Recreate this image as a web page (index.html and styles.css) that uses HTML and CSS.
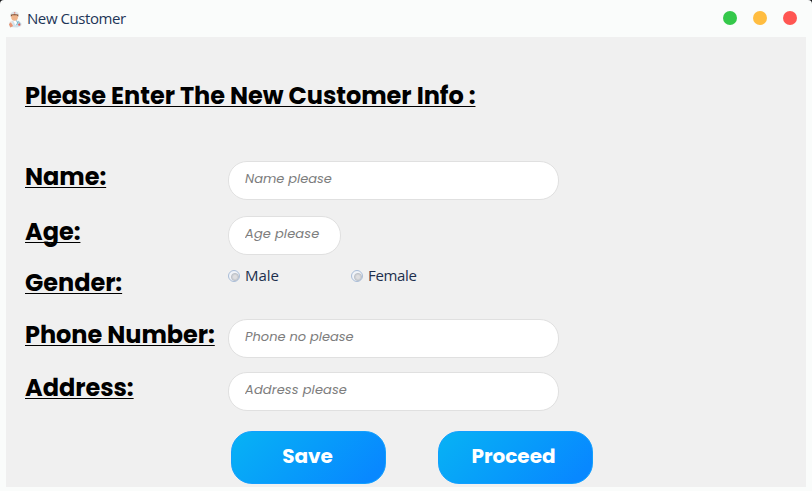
FILE: index.html
```html
<!DOCTYPE html>
<html lang="en">
<head>
<meta charset="utf-8">
<title>New Customer</title>
<link rel="stylesheet" href="styles.css">
</head>
<body>
<div class="window">
  <header class="titlebar">
    <svg class="app-icon" viewBox="0 0 16 18" aria-hidden="true">
      <path d="M2 17 1 13l3-2.500 4-1 4 1 2.500 3L14 16l-4 1.500z" fill="#d3e2eb"/>
      <path d="m5.500 10 2.500 5 2.500-5z" fill="#fff"/>
      <path d="M1.500 12 4 10l1.500 6-3 1z" fill="#eee5e0"/>
      <path d="m1 14 2-2 2.500 4-3 1.500z" fill="#e99675"/>
      <path d="m9 10 1.500 3-1.500 2M11 11l2 3" fill="none" stroke="#6cb6cb"/>
      <circle cx="12" cy="14.500" r="1.200" fill="#e65a55"/>
      <ellipse cx="7" cy="6" rx="3.600" ry="4.300" fill="#efb48b"/>
      <path d="M3 6V3.500h8V6L9.500 4.500h-5z" fill="#76482f"/>
      <path d="M2.800 3.700C2.600 1.500 5 .5 7 .5s4.600 1 4.300 3.200L7 3z" fill="#dfe5e8"/>
      <path d="M6.300 2h1.500" stroke="#e05b50"/>
    </svg>
    <span class="title">New Customer</span>
    <div class="controls"><i class="dot green"></i><i class="dot amber"></i><i class="dot red"></i></div>
  </header>
  <main class="content">
    <h1 class="heading">Please Enter The New Customer Info :</h1>
    <form class="form">
      <div class="row"><label class="label" for="name">Name:</label><input id="name" class="field" placeholder="Name please"></div>
      <div class="row row-age"><label class="label" for="age">Age:</label><input id="age" class="field short" placeholder="Age please"></div>
      <div class="row row-gender"><span class="label">Gender:</span>
        <div class="radios">
          <label class="option"><input class="radio" type="radio" name="gender"><span>Male</span></label>
          <label class="option"><input class="radio" type="radio" name="gender"><span>Female</span></label>
        </div>
      </div>
      <div class="row row-phone"><label class="label" for="phone">Phone Number:</label><input id="phone" class="field" placeholder="Phone no please"></div>
      <div class="row row-address"><label class="label" for="address">Address:</label><input id="address" class="field" placeholder="Address please"></div>
      <div class="actions"><button class="button" type="button">Save</button><button class="button proceed" type="button">Proceed</button></div>
    </form>
  </main>
</div>
</body>
</html>
```
FILE: styles.css
```css
* { box-sizing: border-box; }
body { margin: 0; background: #16181a; font-family: "Poppins", Inter, sans-serif; }
.window { width: 812px; height: 491px; padding: 0 6px 4px; background: #fafcfb; border-radius: 4px 4px 0 0; overflow: hidden; }
.titlebar { display: flex; align-items: center; height: 37px; padding: 0 9px 1px 2px; }
.app-icon { width: 15px; height: 17px; margin: 2px 4px 0 0; }
.title, .option { font-family: "Segoe UI", "Open Sans", sans-serif; font-size: 15px; color: #1d3557; white-space: nowrap; }
.title { margin-top: -1px; letter-spacing: -0.42px; }
.controls { display: flex; gap: 16px; margin-left: auto; }
.dot { width: 14px; height: 14px; border-radius: 50%; }
.green { background: #34c84a; }
.amber { background: #ffbd40; }
.red { background: #ff5652; }
.content { height: 450px; padding: 43px 19px 0; background: #f0f0f0; }
.heading { margin: 0 0 50px; height: 31px; }
.heading, .label { color: #000; font-size: 24px; font-weight: 700; line-height: 31px; letter-spacing: -0.04px; white-space: nowrap; text-decoration: underline; text-decoration-thickness: 1px; text-underline-offset: 2px; text-decoration-skip-ink: none; }
.row { display: grid; grid-template-columns: 203px auto; justify-content: start; align-items: start; height: 39px; margin-bottom: 16px; }
.row-age { margin-bottom: 12px; }
.row-gender { margin-bottom: 13px; }
.row-phone { margin-bottom: 14px; }
.row-address { margin-bottom: 0; }
.field { width: 331px; height: 39px; margin: 0; padding: 0 16px 4px; border: 1px solid #e0e0e0; border-radius: 19px; background: #fff; font: 13px "Poppins", Inter, sans-serif; outline: 0; }
.short { width: 113px; }
.short, .row-address .field { letter-spacing: 0.12px; }
.field::placeholder { color: #7d7d7d; opacity: 1; font-style: italic; }
.radios { display: flex; }
.option { display: flex; align-items: center; width: 123px; height: 18px; color: #1d2f4d; letter-spacing: -0.35px; }
.option:first-child { letter-spacing: 0; }
.option span { margin-top: -2px; }
.radio { appearance: none; width: 12px; height: 12px; margin: 0 5px 0 0; border: 1px solid #a9bdd8; border-radius: 50%; background: radial-gradient(circle at 60% 60%, #dedee0 0 1.5px, #bfc3c9 3.5px, #f0f3f8 4.5px); }
.actions { display: flex; gap: 52px; margin: 20px 0 0 206px; }
.button { width: 155px; height: 53px; padding: 0 2px 3px 0; border: 1px solid #129fff; border-radius: 21px; color: #fff; background: linear-gradient(135deg, #07b0f5 5%, #0799fb 55%, #0888ff 90%); font: 700 20px "Poppins", Inter, sans-serif; }
.proceed { padding-right: 4px; }
```
